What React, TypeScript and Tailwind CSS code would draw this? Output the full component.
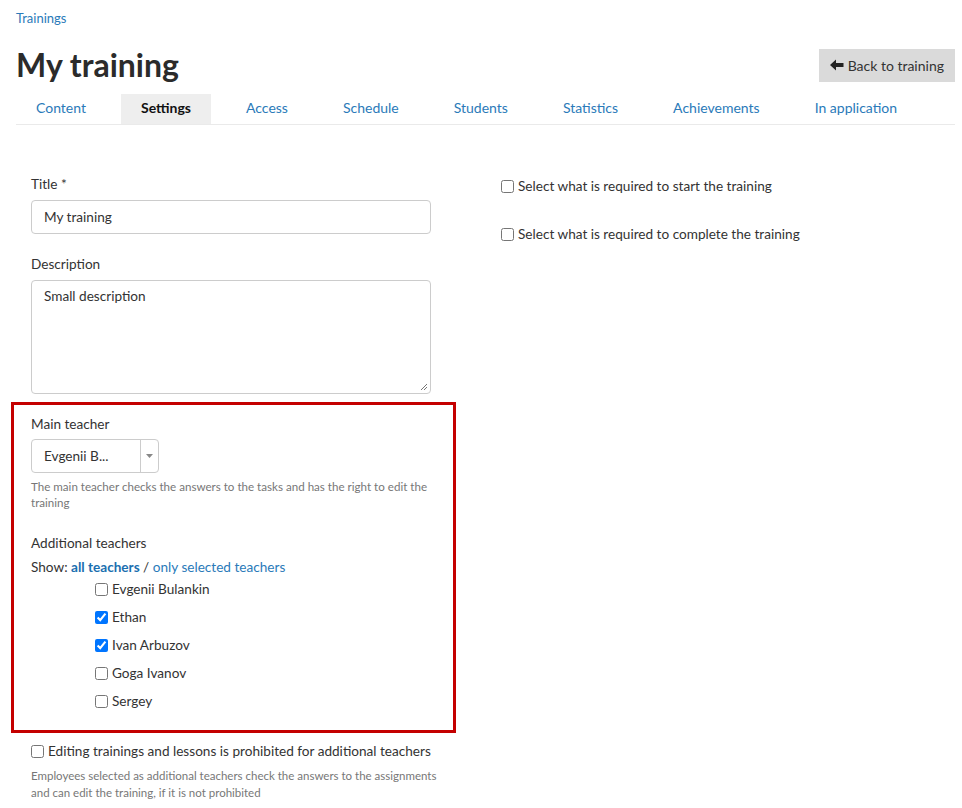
import React from "react";

const tabs = ["Content", "Settings", "Access", "Schedule", "Students", "Statistics", "Achievements", "In application"];
const teachers: [string, boolean][] = [
  ["Evgenii Bulankin", false],
  ["Ethan", true],
  ["Ivan Arbuzov", true],
  ["Goga Ivanov", false],
  ["Sergey", false],
];

export default function App() {
  return (
    <div className="w-[962px] h-[808px] overflow-hidden bg-white text-[#333] text-[13.6px]" style={{ fontFamily: "Lato, 'Open Sans', sans-serif" }}>
      <div className="px-4 pt-[10px]">
        <a className="text-[13px] text-[#2a7ab9] leading-[17px] block">Trainings</a>
        <div className="flex items-center justify-between mt-[18px]">
          <h1 className="text-[32px] font-bold leading-[40px] text-[#2b2b2b]">My training</h1>
          <button className="mr-[-9px] h-[33px] px-[11px] bg-[#dadada] text-[#333] text-[14px] flex items-center gap-[4px]">
            <svg width="14" height="12" viewBox="0 0 14 12"><path d="M0 6 L6 0.5 L6 4 L13.5 4 L13.5 8 L6 8 L6 11.5 Z" fill="#222" /></svg>
            Back to training
          </button>
        </div>
        <div className="mt-[9px] flex border-b border-[#eaeaea] mr-[-9px]">
          {tabs.map((t) => (
            <div
              key={t}
              className={
                "h-[30px] px-5 mr-[15px] flex items-center pb-[3px] text-[14px] " +
                (t === "Settings" ? "bg-[#eeeeee] font-bold text-[#111]" : "text-[#2a7ab9]")
              }
            >
              {t}
            </div>
          ))}
        </div>
      </div>

      <div className="flex pl-[31px] pt-[49px]">
        <div className="w-[400px]">
          <div className="leading-[20px]">Title *</div>
          <div className="mt-[6px] h-[34px] border border-[#ccc] rounded-[4px] px-3 flex items-center">My training</div>
          <div className="mt-[20px] leading-[20px]">Description</div>
          <div className="mt-[6px] h-[114px] border border-[#ccc] rounded-[4px] px-3 pt-[5px] relative">
            Small description
            <svg className="absolute right-[2px] bottom-[2px]" width="8" height="8" viewBox="0 0 8 8">
              <path d="M7 1 L1 7 M7 4 L4 7" stroke="#777" strokeWidth="1" />
            </svg>
          </div>

          <div className="ml-[-20px] mt-[8px] w-[445px] border-[3px] border-[#c40000] pl-[17px] pr-4 pt-[9px] pb-[15px]">
            <div className="leading-[20px]">Main teacher</div>
            <div className="mt-[5px] w-[128px] h-[34px] border border-[#ccc] rounded-[4px] flex">
              <div className="flex-1 px-3 flex items-center border-r border-[#ccc]">Evgenii B...</div>
              <div className="w-[17px] flex items-center justify-center">
                <svg width="7" height="4" viewBox="0 0 7 4"><path d="M0 0 L7 0 L3.5 4 Z" fill="#888" /></svg>
              </div>
            </div>
            <div className="mt-[6px] text-[11.6px] leading-[16px] text-[#777]">
              The main teacher checks the answers to the tasks and has the right to edit the training
            </div>
            <div className="mt-[22px] leading-[20px]">Additional teachers</div>
            <div className="mt-[4px] leading-[20px]">
              Show: <span className="font-bold text-[#1b6fb0]">all teachers</span> /{" "}
              <span className="text-[#2a7ab9]">only selected teachers</span>
            </div>
            <div className="pl-[64px] mt-[-2px]">
              {teachers.map(([n, c]) => (
                <label key={n} className="flex items-center h-[28px] gap-[4px]">
                  <input type="checkbox" defaultChecked={c} className="m-0 w-[13px] h-[13px]" />
                  {n}
                </label>
              ))}
            </div>
          </div>

          <label className="mt-[8px] flex items-center gap-[4px] h-[20px] whitespace-nowrap">
            <input type="checkbox" className="m-0 w-[13px] h-[13px]" />
            Editing trainings and lessons is prohibited for additional teachers
          </label>
          <div className="mt-[6px] text-[11.5px] leading-[17px] text-[#777] w-[422px]">
            Employees selected as additional teachers check the answers to the assignments and can edit the training, if it is not prohibited
          </div>
        </div>

        <div className="ml-[70px] pt-[2px]">
          <label className="flex items-center gap-[4px] h-[20px]">
            <input type="checkbox" className="m-0 w-[13px] h-[13px]" />
            Select what is required to start the training
          </label>
          <label className="mt-[28px] flex items-center gap-[4px] h-[20px]">
            <input type="checkbox" className="m-0 w-[13px] h-[13px]" />
            Select what is required to complete the training
          </label>
        </div>
      </div>
    </div>
  );
}
